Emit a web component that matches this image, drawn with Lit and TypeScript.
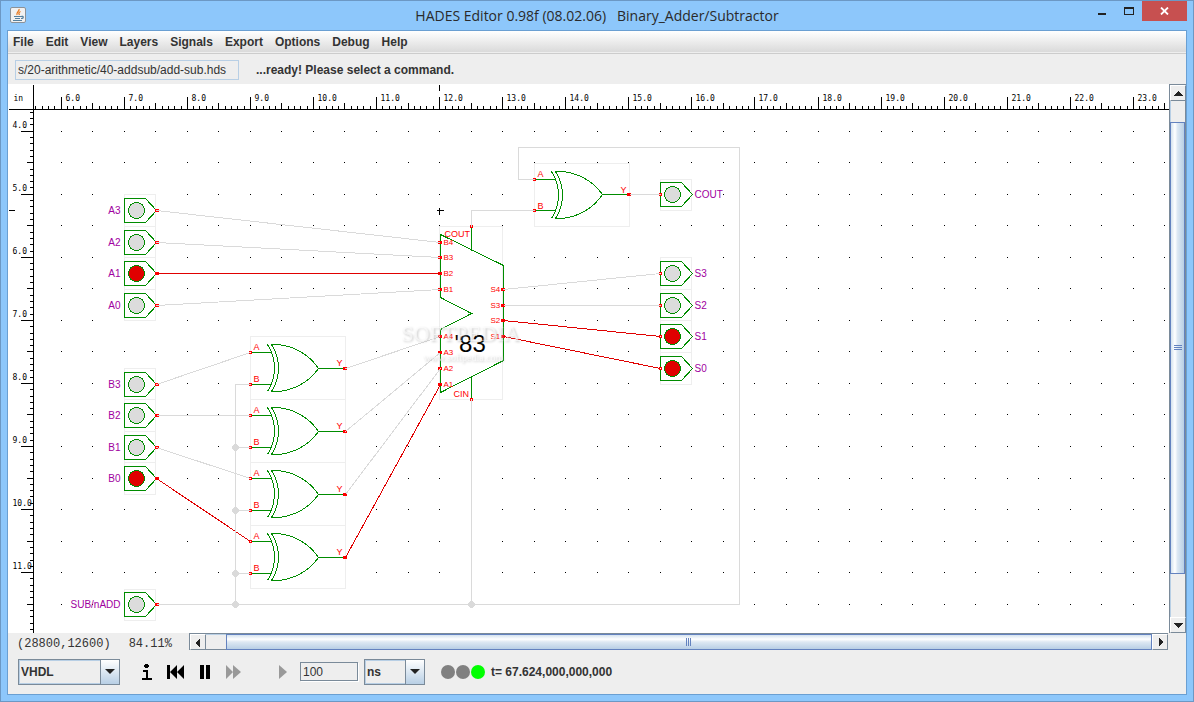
import { LitElement, html, css, svg } from "lit";
import { customElement, state } from "lit/decorators.js";

/* ---- schematic model, in editor units (one unit = one ruler number) ---- */

const UNIT = 6307 / 100;
const LEFT = 5318 / 100;
const TOP = 4718 / 100;

/* grid and rulers snap down, parts and wires snap to the nearest pixel */
const px = (u: number) => Math.floor(LEFT + (u - 6) * UNIT);
const py = (u: number) => Math.floor(TOP + (u - 4) * UNIT);
const ox = (u: number) => Math.floor(LEFT + 0.5 + (u - 6) * UNIT);
const oy = (u: number) => Math.floor(TOP + 0.6 + (u - 4) * UNIT);

type Pin = { name: string; x: number; y: number; on?: boolean };

const inputs: Pin[] = [
  { name: "A3", x: 7, y: 5.25 },
  { name: "A2", x: 7, y: 5.75 },
  { name: "A1", x: 7, y: 6.25, on: true },
  { name: "A0", x: 7, y: 6.75 },
  { name: "B3", x: 7, y: 8 },
  { name: "B2", x: 7, y: 8.5 },
  { name: "B1", x: 7, y: 9 },
  { name: "B0", x: 7, y: 9.5, on: true },
  { name: "SUB/nADD", x: 7, y: 11.5 },
];

const outputs: Pin[] = [
  { name: "COUT", x: 15.5, y: 5 },
  { name: "S3", x: 15.5, y: 6.25 },
  { name: "S2", x: 15.5, y: 6.75 },
  { name: "S1", x: 15.5, y: 7.25, on: true },
  { name: "S0", x: 15.5, y: 7.75, on: true },
];

const gates = [
  { x: 9, y: 7.25 },
  { x: 9, y: 8.25 },
  { x: 9, y: 9.25 },
  { x: 9, y: 10.25 },
  { x: 13.5, y: 4.5 },
];

type Wire = { on?: boolean; pts: [number, number][] };

const wires: Wire[] = [
  { pts: [[7.5, 5.25], [12, 5.75]] },
  { pts: [[7.5, 5.75], [12, 6]] },
  { on: true, pts: [[7.5, 6.25], [12, 6.25]] },
  { pts: [[7.5, 6.75], [12, 6.5]] },
  { pts: [[7.5, 8], [9, 7.5]] },
  { pts: [[7.5, 8.5], [9, 8.5]] },
  { pts: [[7.5, 9], [9, 9.5]] },
  { on: true, pts: [[7.5, 9.5], [9, 10.5]] },
  { pts: [[10.5, 7.75], [12, 7.25]] },
  { pts: [[10.5, 8.75], [12, 7.5]] },
  { pts: [[10.5, 9.75], [12, 7.75]] },
  { on: true, pts: [[10.5, 10.75], [12, 8]] },
  { pts: [[9, 8], [8.75, 8], [8.75, 11.5]] },
  { pts: [[8.75, 9], [9, 9]] },
  { pts: [[8.75, 10], [9, 10]] },
  { pts: [[8.75, 11], [9, 11]] },
  { pts: [[7.5, 11.5], [16.75, 11.5], [16.75, 4.25], [13.25, 4.25], [13.25, 4.75], [13.5, 4.75]] },
  { pts: [[12.5, 5.5], [12.5, 5.25], [13.5, 5.25]] },
  { pts: [[12.5, 8.25], [12.5, 11.5]] },
  { pts: [[15, 5], [15.5, 5]] },
  { pts: [[13, 6.5], [15.5, 6.25]] },
  { pts: [[13, 6.75], [15.5, 6.75]] },
  { on: true, pts: [[13, 7], [15.5, 7.25]] },
  { on: true, pts: [[13, 7.25], [15.5, 7.75]] },
];

const junctions: [number, number][] = [
  [8.75, 9], [8.75, 10], [8.75, 11], [8.75, 11.5], [12.5, 11.5],
];

const adderLeft: [string, number][] = [
  ["B4", 5.75], ["B3", 6], ["B2", 6.25], ["B1", 6.5],
  ["A4", 7.25], ["A3", 7.5], ["A2", 7.75], ["A1", 8],
];
const adderRight: [string, number][] = [
  ["S4", 6.5], ["S3", 6.75], ["S2", 7], ["S1", 7.25],
];

@customElement("schematic-canvas")
export class SchematicCanvas extends LitElement {
  static styles = css`
    :host { display: block; position: relative; background: #fff; overflow: hidden; }
    .sheet { display: block; position: absolute; inset: 0; width: 100%; height: 100%; }
    .ink { stroke: #000; fill: none; }
    .dots { fill: #000; }
    .box { fill: #fff; stroke: #eee; }
    .symbol { fill: none; stroke: #008c00; }
    .off { fill: #dcdcdc; stroke: #008c00; }
    .lit { fill: #e00000; stroke: #008c00; }
    .port { fill: #fff; stroke: #f00; }
    .driver { fill: #f00; stroke: #f00; }
    .wire { fill: none; stroke: #dadada; }
    .hot { fill: none; stroke: #e00000; }
    .joint { fill: #dadada; }
    .crisp { shape-rendering: crispEdges; }
    text { font-family: "Liberation Sans", Arial, sans-serif; }
    .scale { font: 8px "DejaVu Sans Mono", monospace; }
    .net { font-size: 10px; fill: #a000a0; }
    .end { text-anchor: end; }
    .pin { font-size: 9px; fill: #f00; }
    .tiny { font-size: 8px; fill: #f00; }
    .part { font-size: 24px; fill: #000; }
    .mark { font-family: "Liberation Serif", serif; fill: #fff; fill-opacity: 0.6; filter: drop-shadow(1px 1px 1px #aaa); }
    .big { font-size: 22px; }
    .small { font-size: 10px; }
  `;

  @state() private wide = 1161;
  @state() private tall = 549;
  private observer?: ResizeObserver;

  connectedCallback() {
    super.connectedCallback();
    this.observer = new ResizeObserver(() => this.measure());
    this.observer.observe(this);
  }

  disconnectedCallback() {
    super.disconnectedCallback();
    this.observer?.disconnect();
  }

  private measure() {
    this.wide = this.clientWidth;
    this.tall = this.clientHeight;
  }

  private ruler() {
    let d = `M25 0V${this.tall}M0 25H${this.wide}`;
    for (let i = -4; px(6 + i / 10) < this.wide; i++)
      d += `M${px(6 + i / 10)} 25V${i % 10 === 0 ? 12 : i % 5 === 0 ? 18 : 21}`;
    for (let i = -3; py(4 + i / 10) < this.tall; i++)
      d += `M25 ${py(4 + i / 10)}H${i % 10 === 0 ? 12 : i % 5 === 0 ? 18 : 21}`;
    const across: number[] = [];
    for (let n = 6; px(n) + 24 < this.wide; n++) across.push(n);
    const down: number[] = [];
    for (let n = 4; py(n) < this.tall; n++) down.push(n);
    return svg`
      <path class="ink" d=${d}></path>
      <path class="ink" d=${`M${px(12)} 0V6M0 ${py(5.25)}H6`}></path>
      <text class="scale" x="5" y="16">in</text>
      ${across.map((n) => svg`<text class="scale" x=${px(n) + 4} y="16">${n}.0</text>`)}
      ${down.map((n) => svg`<text class="scale" x="4" y=${py(n) - 4}>${n}.0</text>`)}`;
  }

  private dots() {
    let d = "";
    for (let i = 6; px(i) < this.wide; i += 0.5)
      for (let j = 4; py(j) < this.tall; j += 0.5) d += `M${px(i)} ${py(j)}h1v1h-1z`;
    return svg`<path class="dots" transform="translate(-0.5 -0.5)" d=${d}></path>`;
  }

  private port(x: number, y: number) {
    return svg`<rect class="port" x=${x - 1} y=${y - 1} width="2" height="2"></rect>`;
  }

  private driver(x: number, y: number) {
    return svg`<rect class="driver" x=${x - 1} y=${y - 1} width="3" height="2"></rect>`;
  }

  private terminal(p: Pin, output: boolean) {
    const x = ox(p.x), y = oy(p.y), top = oy(p.y - 0.25);
    return svg`
      <rect class="box" x=${x} y=${top} width="31" height=${oy(p.y + 0.25) - top}></rect>
      <path class="symbol" d=${`M${x} ${y - 12}h21l11 12l-11 12h-21z`}></path>
      <circle class=${p.on ? "lit" : "off"} cx=${x + 12} cy=${y} r="8"></circle>
      ${output ? this.port(x, y) : this.driver(ox(p.x + 0.5), y)}
      ${output
        ? svg`<text class="net" x=${x + 34} y=${y + 3}>${p.name}</text>`
        : svg`<text class="net end" x=${x - 4} y=${y + 3}>${p.name}</text>`}`;
  }

  private gate(g: { x: number; y: number }) {
    const top = oy(g.y);
    const a = oy(g.y + 0.25) - top, b = oy(g.y + 0.75) - top, out = oy(g.y + 0.5) - top;
    return svg`<g transform=${`translate(${ox(g.x)} ${top})`}>
      <rect class="box" x="0" y="0" width="95" height="63"></rect>
      <path class="symbol" d=${`M0 ${a}H21M0 ${b}H21M68 ${out}H95`}></path>
      <path class="symbol" d=${`M21 8H25A54 54 0 0 1 68 ${out}A54 54 0 0 1 25 55H21A43 43 0 0 0 21 8M17 8A43 43 0 0 1 17 55`}></path>
      ${this.port(0, a)}${this.port(0, b)}${this.driver(94, out)}
      <text class="pin" x="3" y="13">A</text>
      <text class="pin" x="3" y="45">B</text>
      <text class="pin" x="86" y="29">Y</text>
    </g>`;
  }

  private adder() {
    const x = px(12), y = oy(5.5);
    return svg`
      <g transform=${`translate(${x} ${y})`}>
        <rect class="box" x="0" y="0" width="63" height="173"></rect>
        <path class="symbol" d="M1 8L64 39V134L1 166V103L32 87L1 71ZM32 0V24M32 150V173"></path>
        ${this.port(32, 0)}${this.port(32, 173)}
        <text class="pin" x="5" y="10">COUT</text>
        <text class="pin" x="14" y="170">CIN</text>
        <text class="part" x="15" y="125">'83</text>
      </g>
      ${adderLeft.map(([n, u]) => svg`${this.driver(ox(12) - 1, oy(u))}<text class="tiny" x=${x + 4} y=${oy(u) + 2}>${n}</text>`)}
      ${adderRight.map(([n, u]) => svg`${this.driver(ox(13) - 1, oy(u))}<text class="tiny" x=${x + 51} y=${oy(u) + 2}>${n}</text>`)}`;
  }

  render() {
    return html`<svg class="sheet" role="img" aria-label="Binary adder subtractor schematic">
      <g class="crisp" transform="translate(0.5 0.5)">
        ${this.dots()} ${this.ruler()}
        ${inputs.map((p) => this.terminal(p, false))}
        ${outputs.map((p) => this.terminal(p, true))}
        ${gates.map((g) => this.gate(g))}
        ${this.adder()}
        ${wires.map((w) => svg`<polyline class=${w.on ? "hot" : "wire"} points=${w.pts.map(([a, b]) => `${ox(a)},${oy(b)}`).join(" ")}></polyline>`)}
        ${junctions.map(([a, b]) => svg`<path class="joint" transform="translate(-0.5 -0.5)" d=${`M${ox(a) - 1} ${oy(b) - 3}h3v1h1v1h1v3h-1v1h-1v1h-3v-1h-1v-1h-1v-3h1v-1h1z`}></path>`)}
        <path class="ink" d=${`M${px(12) - 3} ${py(5.25)}h7M${px(12)} ${py(5.25) - 3}v7`}></path>
        <text class="mark big" x="393" y="256">SOFTPEDIA</text>
        <text class="mark small" x="415" y="276">www.softpedia.com</text>
      </g>
    </svg>`;
  }
}

@customElement("app-root")
export class AppRoot extends LitElement {
  static styles = css`
    :host { display: block; }
    * { box-sizing: border-box; }
    button, input, select { font: inherit; color: inherit; margin: 0; border: 0; padding: 0; background: none; border-radius: 0; }
    .window {
      display: flex; flex-direction: column; min-height: 100vh; padding: 0 6px 6px;
      border: 1px solid #6c98c4; background: #8dc7fb; color: #333;
      font: 12px/16px "Liberation Sans", Arial, sans-serif;
    }
    .titlebar { display: grid; grid-template-columns: 1fr auto 1fr; height: 29px; }
    .logo { margin: 6px 3px; width: 16px; height: 16px; }
    .title { margin: 0; font: 14px/30px "Open Sans", "Noto Sans", sans-serif; color: #2a2a2a; white-space: pre; }
    .controls { display: flex; justify-content: flex-end; align-items: flex-start; }
    .control { width: 27px; height: 20px; }
    .close { width: 45px; background: #c75050; }
    .control svg { display: block; margin: auto; }
    .client { flex: 1; display: flex; flex-direction: column; border: 1px solid #6a9fd2; background: #eee; }
    .menu {
      display: flex; gap: 12px; height: 23px; padding: 0 4px 2px 5px; align-items: center;
      background: linear-gradient(#fff, #dadada 21px, #eee 21px, #eee 22px, #ccc 22px); font-weight: bold;
    }
    .tools { display: flex; align-items: center; gap: 17px; height: 30px; padding: 1px 7px 0; font-weight: bold; }
    .path { width: 224px; height: 20px; padding: 0 2px; border: 1px solid #b8cfe5; font-weight: normal; }
    .work { flex: 1; display: flex; }
    .work schematic-canvas { flex: 1; }
    .vbar { display: flex; flex-direction: column; width: 17px; border: 1px solid #7a8a99; border-width: 1px 0 0 1px; }
    .hbar { flex: 1; display: flex; height: 17px; margin-right: 18px; border: 1px solid #7a8a99; border-width: 1px 0 0 1px; }
    .arrow { flex: none; display: grid; place-items: center; width: 16px; height: 16px; border: 1px solid #7a8a99; border-top-color: #fff; border-left-color: #fff; }
    .track { flex: 1; display: flex; border: 1px solid #b8cfe5; border-width: 0 1px; border-right-color: #7a8a99; }
    .vbar .track { flex-direction: column; width: 16px; padding: 21px 0 43px; }
    .hbar .track { height: 16px; padding-left: 20px; border-width: 1px 0; border-color: #b8cfe5; border-bottom-color: #7a8a99; }
    .thumb { flex: 1; display: grid; place-items: center; border: 1px solid #6382bf; }
    .vbar .thumb { background: linear-gradient(to right, #d4e2ef, #fff 30%, #dde8f3 50%, #b8cfe5); margin: 0 0 0 -1px; }
    .hbar .thumb { background: linear-gradient(#d4e2ef, #fff 30%, #dde8f3 50%, #b8cfe5); margin: -1px 0; }
    .status { display: flex; align-items: flex-start; height: 18px; }
    .coords { display: flex; gap: 18px; width: 181px; padding: 2px 0 0 9px; font: 12px/18px "Liberation Mono", monospace; }
    .sim { display: flex; align-items: center; height: 43px; padding: 0 10px 2px; font-weight: bold; }
    .combo { display: grid; grid-template-columns: 1fr 19px; height: 26px; border: 1px solid #7a8a99; }
    .combo select { grid-area: 1 / 1 / 2 / 3; appearance: none; padding: 0 1px; font-weight: bold; border: 1px solid #b8cfe5; }
    .drop { grid-area: 1 / 2; display: grid; place-items: center; pointer-events: none; border-left: 1px solid #7a8a99; background: linear-gradient(#fff, #b8cfe5); }
    .lang { width: 102px; }
    .units { width: 61px; margin: 0 16px 0 6px; }
    .icon { width: 29px; height: 24px; }
    .icon svg { display: block; margin: auto; }
    .icons { display: flex; margin-left: 12px; }
    .step { margin: 0 3px 0 20px; }
    .span { width: 58px; height: 19px; padding: 0 2px; border: 1px solid #7a8a99; box-shadow: 1px 1px #fff; font-weight: normal; }
    .lamps { margin-right: 6px; }
    .time { padding-top: 1px; }
  `;

  private arrow(d: string, label: string) {
    return html`<button class="arrow" aria-label=${label}>
      <svg width="9" height="9" fill="#222" shape-rendering="crispEdges"><path d=${d}></path></svg>
    </button>`;
  }

  private combo(cls: string, label: string, options: string[]) {
    return html`<div class="combo ${cls}">
      <select aria-label=${label}>${options.map((o) => html`<option>${o}</option>`)}</select>
      <span class="drop"><svg width="10" height="5" fill="#222"><path d="M0 0H10L5 5Z"></path></svg></span>
    </div>`;
  }

  render() {
    const menus = ["File", "Edit", "View", "Layers", "Signals", "Export", "Options", "Debug", "Help"];
    return html`<div class="window">
      <header class="titlebar">
        <svg class="logo" viewBox="0 0 16 16" fill="none">
          <rect x="0.5" y="0.5" width="15" height="15" rx="1.5" fill="#f1f1f1" stroke="#8b9299"></rect>
          <path d="M9 2C10 4 6 5 7 8M10.500 4.500C8.500 5.500 8.500 6.500 9.500 8" stroke="#e8791e" stroke-width="1.300"></path>
          <path d="M4 9.500H11M5 11.500H10M3 13.500H12M11 9.500C14 8.500 14 11.500 11 11.500" stroke="#54809f" stroke-width="1.200"></path>
        </svg>
        <h1 class="title">HADES Editor 0.98f (08.02.06)   Binary_Adder/Subtractor</h1>
        <div class="controls">
          <button class="control" aria-label="Minimize"><svg width="8" height="10"><path d="M0 7H8V9H0Z" fill="#222"></path></svg></button>
          <button class="control" aria-label="Maximize"><svg width="10" height="8" shape-rendering="crispEdges"><path d="M0 0H10V8H0ZM1 2V7H9V2Z" fill="#222" fill-rule="evenodd"></path></svg></button>
          <button class="control close" aria-label="Close"><svg width="9" height="8"><path d="M1 0.500L8 7.500M8 0.500L1 7.500" stroke="#fff" stroke-width="1.800"></path></svg></button>
        </div>
      </header>
      <main class="client">
        <nav class="menu">${menus.map((m) => html`<button>${m}</button>`)}</nav>
        <div class="tools">
          <input class="path" aria-label="Design file" readonly value="s/20-arithmetic/40-addsub/add-sub.hds" />
          <span>...ready! Please select a command.</span>
        </div>
        <div class="work">
          <schematic-canvas></schematic-canvas>
          <div class="vbar">
            ${this.arrow("M4 2H5V3H6V4H7V5H8V6H9V7H0V6H1V5H2V4H3V3H4Z", "Scroll up")}
            <div class="track"><div class="thumb"><svg width="8" height="6" shape-rendering="crispEdges"><path d="M0 0H8V1H0ZM0 2H8V3H0ZM0 4H8V5H0Z" fill="#6382bf"></path></svg></div></div>
            ${this.arrow("M0 2H9V3H8V4H7V5H6V6H5V7H4V6H3V5H2V4H1V3H0Z", "Scroll down")}
          </div>
        </div>
        <div class="status">
          <div class="coords"><span>(28800,12600)</span><span>84.11%</span></div>
          <div class="hbar">
            ${this.arrow("M2 4H3V3H4V2H5V1H6V0H6V9H5V8H4V7H3V6H2Z", "Scroll left")}
            <div class="track"><div class="thumb"><svg width="6" height="8" shape-rendering="crispEdges"><path d="M0 0V8H1V0ZM2 0V8H3V0ZM4 0V8H5V0Z" fill="#6382bf"></path></svg></div></div>
            ${this.arrow("M3 0H4V1H5V2H6V3H7V5H6V6H5V7H4V8H3Z", "Scroll right")}
          </div>
        </div>
        <div class="sim">
          ${this.combo("lang", "Language", ["VHDL", "Verilog"])}
          <div class="icons">
            <button class="icon" aria-label="Info"><svg width="10" height="16" shape-rendering="crispEdges"><path d="M3 0H6V1H7V3H6V4H3V3H2V1H3ZM1 6H6V14H10V16H0V14H4V8H1Z"></path></svg></button>
            <button class="icon" aria-label="Restart"><svg width="17" height="14"><path d="M0 0H3V14H0ZM10 0V14L3 7ZM17 0V14L10 7Z"></path></svg></button>
            <button class="icon" aria-label="Pause"><svg width="10" height="14"><path d="M0 0H4V14H0ZM6 0H10V14H6Z"></path></svg></button>
            <button class="icon" aria-label="Run"><svg width="15" height="14" fill="#999"><path d="M0 0L7 7L0 14ZM7 0L15 7L7 14Z"></path></svg></button>
          </div>
          <button class="icon step" aria-label="Step"><svg width="8" height="14" fill="#999"><path d="M0 0L8 7L0 14Z"></path></svg></button>
          <input class="span" aria-label="Step length" value="100" />
          ${this.combo("units", "Time unit", ["ns", "us", "ms"])}
          <svg class="lamps" width="44" height="14"><circle cx="7" cy="7" r="7" fill="#808080"></circle><circle cx="22" cy="7" r="7" fill="#808080"></circle><circle cx="37" cy="7" r="7" fill="#0f0"></circle></svg>
          <span class="time">t= 67.624,000,000,000</span>
        </div>
      </main>
    </div>`;
  }
}
